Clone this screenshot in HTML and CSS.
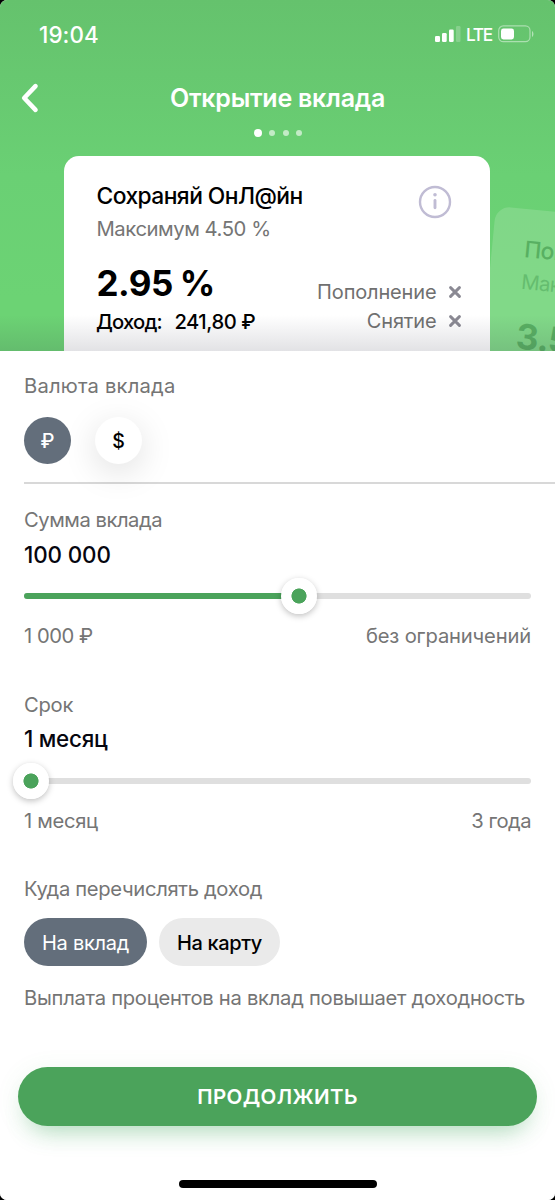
FILE: index.html
```html
<!DOCTYPE html>
<html lang="ru">
<head>
<meta charset="utf-8">
<title>Открытие вклада</title>
<link rel="stylesheet" href="styles.css">
</head>
<body>
<div class="screen">
  <header class="header">
    <div class="status">
      <span class="time">19:04</span>
      <div class="status-right">
        <svg class="signal" width="26" height="17" viewBox="0 0 26 17" fill="#fff"><rect x="0" y="10" width="5" height="6" rx="1.2"/><rect x="7" y="7" width="4.7" height="9" rx="1.2"/><rect x="14" y="3.5" width="4.7" height="12.5" rx="1.2"/><rect x="21" y="0" width="4.5" height="16" rx="1.2" opacity=".22"/></svg>
        <span class="lte">LTE</span>
        <svg class="battery" width="37" height="18" viewBox="0 0 37 18"><rect x=".7" y=".9" width="31.3" height="15.8" rx="4.6" fill="none" stroke="#fff" stroke-opacity=".45" stroke-width="1.2"/><rect x="3" y="3.5" width="13" height="11" rx="2.4" fill="#fff"/><path d="M34 6v6c1.9-1 1.9-5 0-6z" fill="#fff" fill-opacity=".5"/></svg>
      </div>
    </div>
    <div class="nav">
      <svg class="back" width="20" height="32" viewBox="0 0 20 32"><path d="M15.5 4.2 4.2 16l11.3 11.8" fill="none" stroke="#fff" stroke-width="4.6" stroke-linecap="round" stroke-linejoin="round"/></svg>
      <h1 class="title">Открытие вклада</h1>
    </div>
    <div class="dots"><i class="dot dot-active"></i><i class="dot"></i><i class="dot"></i><i class="dot"></i></div>
    <div class="carousel">
      <section class="card">
        <div class="card-top">
          <div>
            <div class="card-name">Сохраняй ОнЛ@йн</div>
            <div class="card-max">Максимум 4.50 %</div>
          </div>
          <svg class="info" width="34" height="34" viewBox="0 0 34 34"><circle cx="17" cy="17" r="15" fill="none" stroke="#c0bcd4" stroke-width="2.4"/><circle cx="17" cy="9.8" r="1.8" fill="#c0bcd4"/><path d="M17 15.5v7.3" stroke="#c0bcd4" stroke-width="2.9" stroke-linecap="round"/></svg>
        </div>
        <div class="card-bottom">
          <div>
            <div class="rate">2.95 %</div>
            <div class="income"><span class="income-label">Доход:</span><span class="income-sum">241,80 ₽</span></div>
          </div>
          <div class="features">
            <div class="feature"><span class="refill">Пополнение</span><svg width="12" height="12" viewBox="0 0 12 12"><path d="m1.6 1.6 8.8 8.8m0-8.8-8.8 8.8" stroke="#8a8993" stroke-width="2.9" stroke-linecap="round"/></svg></div>
            <div class="feature"><span class="withdraw">Снятие</span><svg width="12" height="12" viewBox="0 0 12 12"><path d="m1.6 1.6 8.8 8.8m0-8.8-8.8 8.8" stroke="#8a8993" stroke-width="2.9" stroke-linecap="round"/></svg></div>
          </div>
        </div>
      </section>
      <div class="next-clip">
        <section class="card card-next">
          <div class="card-name">Пополняй</div>
          <div class="card-max">Максимум</div>
          <div class="rate rate-next">3.55 %</div>
        </section>
      </div>
    </div>
  </header>

  <main class="sheet">
    <div class="label currency-label">Валюта вклада</div>
    <div class="currencies">
      <button class="coin coin-active">₽</button>
      <button class="coin">$</button>
    </div>
    <hr class="line">

    <section class="field">
      <div class="label sum-label">Сумма вклада</div>
      <div class="value sum-value">100 000</div>
      <div class="slider"><div class="track"><div class="fill" style="width:54.2%"></div></div><div class="thumb" style="left:275px"></div></div>
      <div class="limits"><span class="min-sum">1 000 ₽</span><span class="max-sum">без ограничений</span></div>
    </section>

    <section class="field">
      <div class="label">Срок</div>
      <div class="value term-value">1 месяц</div>
      <div class="slider"><div class="track"></div><div class="thumb" style="left:7px"></div></div>
      <div class="limits"><span class="min-term">1 месяц</span><span class="max-term">3 года</span></div>
    </section>

    <section class="payout">
      <div class="label payout-label">Куда перечислять доход</div>
      <div class="pills"><button class="pill pill-active">На вклад</button><button class="pill">На карту</button></div>
      <div class="label hint">Выплата процентов на вклад повышает доходность</div>
    </section>

    <button class="submit">ПРОДОЛЖИТЬ</button>
    <div class="home"></div>
  </main>
</div>
</body>
</html>
```
FILE: styles.css
```css
* { box-sizing: border-box; }
body { margin: 0; background: #000; font-family: Inter, "Liberation Sans", sans-serif; }
button { border: 0; padding: 0; font-family: inherit; }
svg { display: block; flex: none; }

.screen { width: 555px; height: 1200px; overflow: hidden; border-radius: 7px; background: #fff; white-space: nowrap; }

.header { position: relative; height: 351px; overflow: hidden; background: linear-gradient(#65c26d, #6ad074 50%, #6cd374 85%, #6cd374); }
.header::after { content: ""; position: absolute; inset: auto 0 0; height: 36px; background: linear-gradient(rgba(50, 50, 70, 0), rgba(50, 50, 70, .14)); }

.status { display: flex; justify-content: space-between; height: 68px; padding: 0 20px 0 39px; align-items: center; color: #fff; }
.time { font-size: 22.4px; font-weight: 500; letter-spacing: .1px; }
.status-right { display: flex; align-items: center; }
.lte { margin: 1px 6px 0 5px; width: 26px; font-size: 17.3px; font-weight: 500; letter-spacing: -1.3px; }

.nav { position: relative; display: flex; align-items: center; justify-content: center; height: 60px; }
.back { position: absolute; left: 19.5px; top: 13.5px; }
.title { margin: 0; font-size: 25px; line-height: 30px; font-weight: 600; color: #fff; letter-spacing: -.25px; }

.dots { display: flex; align-items: center; height: 10px; gap: 7.3px; padding-left: 254.2px; }
.dot { width: 6px; height: 6px; border-radius: 50%; background: rgba(255, 255, 255, .6); }
.dot-active { width: 8px; height: 8px; background: #fff; }

.carousel { display: flex; height: 213px; padding: 18px 0 0 64px; }
.card { width: 426px; height: 230px; flex: none; padding: 24.5px 29.5px 0 33px; border-radius: 15px; background: #fff; color: #000; }
.card-top, .card-bottom { display: flex; justify-content: space-between; }
.card-name { font-size: 22.8px; line-height: 30px; font-weight: 500; letter-spacing: -.55px; margin-left: -.5px; }
.card-max { margin-top: 3px; font-size: 20.3px; line-height: 30px; letter-spacing: -.45px; color: #757575; margin-left: -.5px; }
.info { margin: 4.5px 8.5px 0 0; }
.card-bottom { margin-top: 18px; }
.rate { font-size: 35px; line-height: 42px; font-weight: 700; letter-spacing: -.5px; word-spacing: -1px; margin-left: -.5px; }
.income { display: flex; gap: 12.5px; margin: 4px 0 0 -1px; font-size: 20.2px; line-height: 28px; font-weight: 500; }
.income-label { letter-spacing: -.8px; }
.income-sum { letter-spacing: -.45px; }
.features { padding-top: 15.5px; }
.feature { display: flex; align-items: center; justify-content: flex-end; gap: 12px; height: 29.5px; font-size: 20px; color: #707070; }
.refill, .withdraw { letter-spacing: -.15px; }

.next-clip { width: 65px; height: 195px; overflow: hidden; flex: none; padding: 50px 0 0 5.5px; }
.card-next { transform: rotate(5.5deg); transform-origin: 0 0; background: rgba(255, 255, 255, .15); color: #58b062; }
.card-next .card-max { color: #65bd6f; }
.rate-next { margin-top: 18px; }

.sheet { height: 849px; padding: 20px 24px 0; background: #fff; }
.label { font-size: 20.2px; line-height: 30px; color: #757575; letter-spacing: -.25px; }
.currency-label { letter-spacing: .2px; }
.sum-label { letter-spacing: -.45px; }
.payout-label { letter-spacing: -.32px; }
.currencies { display: flex; gap: 24px; margin-top: 16px; }
.coin { width: 47px; height: 47px; border-radius: 50%; background: #fff; color: #000; font-size: 19.5px; font-weight: 500; box-shadow: 0 8px 34px rgba(0, 0, 0, .13); padding-top: 1px; }
.coin-active { background: #636e7b; color: #fff; box-shadow: none; }
.line { height: 2px; margin: 18px -24px 0 0; border: 0; background: #d8d8d8; }

.field { height: 184.5px; padding-top: 21px; }
.value { margin-top: 4.5px; font-size: 22.4px; line-height: 30px; font-weight: 500; color: #06060f; }
.sum-value { letter-spacing: -.1px; }
.term-value { letter-spacing: -.25px; }
.slider { position: relative; height: 36px; margin-top: 8.5px; display: flex; align-items: center; }
.track { width: 507px; height: 6px; border-radius: 3px; background: #dfdfdf; overflow: hidden; }
.fill { height: 100%; background: #4ba35b; }
.thumb { position: absolute; top: 0; width: 36px; height: 36px; margin-left: -18px; border-radius: 50%; background: radial-gradient(circle, #4ba35b 7.2px, #fff 7.9px); box-shadow: 0 2px 6px rgba(0, 0, 0, .25); }
.limits { display: flex; justify-content: space-between; margin-top: 7px; font-size: 20.2px; line-height: 30px; color: #757575; letter-spacing: -.3px; }
.min-sum { letter-spacing: -.45px; }
.max-sum { letter-spacing: -.17px; }
.max-term { letter-spacing: -.5px; }

.payout { padding-top: 20.5px; }
.pills { display: flex; gap: 12px; margin-top: 14.5px; }
.pill { width: 121px; height: 47.5px; border-radius: 24px; background: #eaeaea; color: #000; font-size: 20px; font-weight: 500; letter-spacing: -.35px; padding-top: 2px; }
.pill-active { width: 123px; background: #636e7b; color: #fff; font-weight: 400; letter-spacing: -.25px; }
.hint { margin-top: 17px; letter-spacing: -.27px; }

.submit { display: block; width: 519px; height: 59px; margin: 54px 0 0 -6px; border-radius: 30px; background: #4ba35b; color: #fff; font-size: 20.5px; font-weight: 600; letter-spacing: .4px; box-shadow: 0 16px 24px -12px rgba(75, 175, 105, .42), 0 4px 24px rgba(75, 163, 91, .1); }
.home { width: 198px; height: 7.5px; margin: 54.5px auto 0 155px; border-radius: 4px; background: #000; }
```
